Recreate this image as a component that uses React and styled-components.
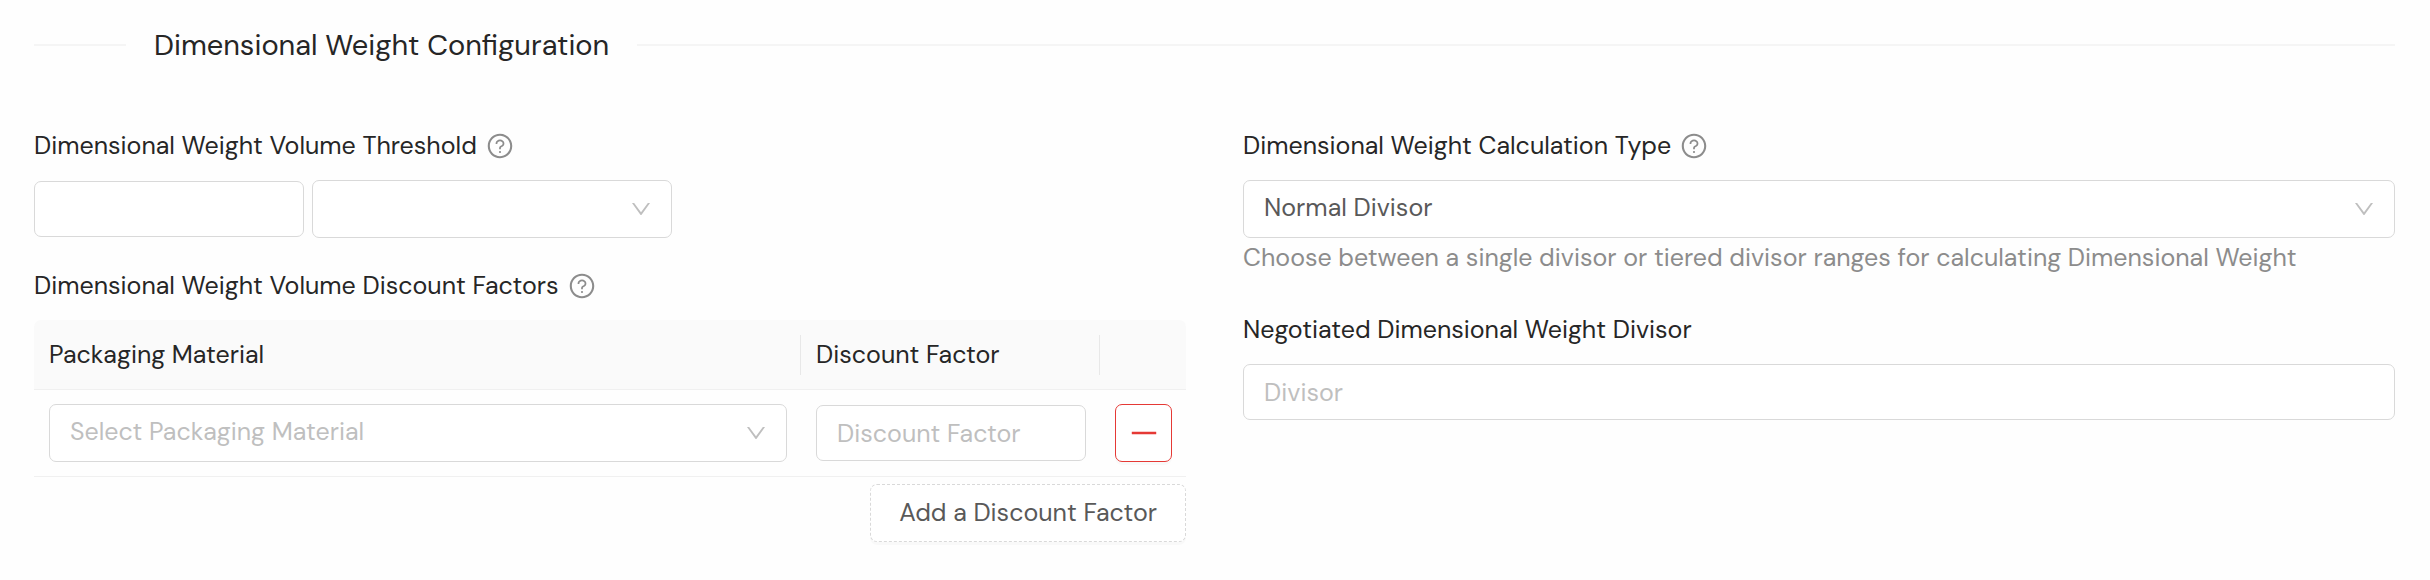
import React, { useState } from "react";
import styled, { createGlobalStyle } from "styled-components";
import {
  AiOutlineDown,
  AiOutlineMinus,
  AiOutlineQuestionCircle,
} from "react-icons/ai";

const App = () => {
  const [formData, setFormData] = useState({
    threshold: "",
    unit: "",
    calculationType: "normal",
    divisor: "",
  });
  const [factors, setFactors] = useState([{ id: 1, material: "", factor: "" }]);

  const handleChange = (e) => {
    const { name, value } = e.target;
    setFormData({
      ...formData,
      [name]: value,
    });
  };

  const handleFactorChange = (id, e) => {
    const { name, value } = e.target;
    setFactors(
      factors.map((row) => (row.id === id ? { ...row, [name]: value } : row))
    );
  };

  const addFactor = () => {
    setFactors([...factors, { id: Date.now(), material: "", factor: "" }]);
  };

  const removeFactor = (id) => {
    setFactors(factors.filter((row) => row.id !== id));
  };

  return (
    <>
      <GlobalStyle />
      <Page>
        <SectionTitle>Dimensional Weight Configuration</SectionTitle>
        <Columns>
          <Column>
            <FormItem>
              <LabelRow>
                <label htmlFor="threshold">
                  Dimensional Weight Volume Threshold
                </label>
                <HelpIcon />
              </LabelRow>
              <ThresholdFields>
                <TextInput
                  id="threshold"
                  name="threshold"
                  value={formData.threshold}
                  onChange={handleChange}
                />
                <SelectWrapper $width="360px">
                  <Select
                    name="unit"
                    aria-label="Volume unit"
                    value={formData.unit}
                    onChange={handleChange}
                  >
                    <option value=""></option>
                    <option value="in">in³</option>
                    <option value="cm">cm³</option>
                  </Select>
                  <Arrow />
                </SelectWrapper>
              </ThresholdFields>
            </FormItem>
            <FormItem>
              <LabelRow>
                <span id="factors-label">
                  Dimensional Weight Volume Discount Factors
                </span>
                <HelpIcon />
              </LabelRow>
              <FactorTable aria-labelledby="factors-label">
                <thead>
                  <tr>
                    <HeaderCell>
                      <HeaderText>Packaging Material</HeaderText>
                    </HeaderCell>
                    <HeaderCell $width="299px">
                      <HeaderText>Discount Factor</HeaderText>
                    </HeaderCell>
                    <HeaderCell $width="86px" aria-label="Actions" />
                  </tr>
                </thead>
                <tbody>
                  {factors.map((row) => (
                    <tr key={row.id}>
                      <Cell>
                        <SelectWrapper $width="100%">
                          <Select
                            name="material"
                            aria-label="Packaging Material"
                            $empty={!row.material}
                            value={row.material}
                            onChange={(e) => handleFactorChange(row.id, e)}
                          >
                            <option value="">Select Packaging Material</option>
                            <option value="box">Box</option>
                            <option value="envelope">Envelope</option>
                          </Select>
                          <Arrow />
                        </SelectWrapper>
                      </Cell>
                      <Cell>
                        <TextInput
                          name="factor"
                          aria-label="Discount Factor"
                          placeholder="Discount Factor"
                          value={row.factor}
                          onChange={(e) => handleFactorChange(row.id, e)}
                        />
                      </Cell>
                      <Cell>
                        <RemoveButton
                          type="button"
                          aria-label="Remove"
                          onClick={() => removeFactor(row.id)}
                        >
                          <AiOutlineMinus />
                        </RemoveButton>
                      </Cell>
                    </tr>
                  ))}
                </tbody>
              </FactorTable>
              <AddButton type="button" onClick={addFactor}>
                Add a Discount Factor
              </AddButton>
            </FormItem>
          </Column>
          <Column>
            <FormItem>
              <LabelRow>
                <label htmlFor="calculationType">
                  Dimensional Weight Calculation Type
                </label>
                <HelpIcon />
              </LabelRow>
              <SelectWrapper $width="100%">
                <Select
                  id="calculationType"
                  name="calculationType"
                  value={formData.calculationType}
                  onChange={handleChange}
                >
                  <option value="normal">Normal Divisor</option>
                  <option value="tiered">Tiered Divisor</option>
                </Select>
                <Arrow />
              </SelectWrapper>
              <Extra>
                Choose between a single divisor or tiered divisor ranges for
                calculating Dimensional Weight
              </Extra>
            </FormItem>
            <FormItem>
              <LabelRow>
                <label htmlFor="divisor">
                  Negotiated Dimensional Weight Divisor
                </label>
              </LabelRow>
              <TextInput
                id="divisor"
                name="divisor"
                placeholder="Divisor"
                $width="100%"
                value={formData.divisor}
                onChange={handleChange}
              />
            </FormItem>
          </Column>
        </Columns>
      </Page>
    </>
  );
};

const GlobalStyle = createGlobalStyle`
  * {
    box-sizing: border-box;
  }

  body {
    margin: 0;
    background: #fefefe;
    color: #262626;
    font-family: "DM Sans", Lato, "Liberation Sans", sans-serif;
    font-size: 25px;
    line-height: 36px;
  }

  input,
  select,
  button {
    font: inherit;
  }
`;

const Page = styled.main`
  padding: 23px 35px 38px 34px;
`;

const SectionTitle = styled.h2`
  display: flex;
  align-items: center;
  gap: 28px;
  margin: 0 0 61px;
  font-size: 29px;
  font-weight: 400;
  line-height: 44px;

  &::before,
  &::after {
    content: "";
    height: 2px;
    background: #f5f5f5;
  }

  &::before {
    width: 92px;
  }

  &::after {
    flex: 1;
  }
`;

const Columns = styled.div`
  display: grid;
  grid-template-columns: 1fr 1fr;
  gap: 57px;
`;

const Column = styled.div`
  display: flex;
  flex-direction: column;
  gap: 30px;
  min-width: 0;
`;

const FormItem = styled.div`
  display: flex;
  flex-direction: column;
`;

const LabelRow = styled.div`
  display: flex;
  align-items: center;
  gap: 9px;
  margin-bottom: 16px;
`;

const HelpIcon = styled(AiOutlineQuestionCircle)`
  width: 28px;
  height: 28px;
  color: #8c8c8c;
`;

const ThresholdFields = styled.div`
  display: flex;
  align-items: center;
  gap: 8px;
`;

const TextInput = styled.input`
  display: block;
  width: ${(props) => props.$width || "270px"};
  height: 56px;
  padding: 0 20px;
  color: #595959;
  background: #fff;
  border: 1px solid #d9d9d9;
  border-radius: 7px;

  &::placeholder {
    color: #bfbfbf;
    opacity: 1;
  }
`;

const SelectWrapper = styled.div`
  position: relative;
  width: ${(props) => props.$width};
`;

const Select = styled.select`
  display: block;
  width: 100%;
  height: 58px;
  padding: 0 56px 2px 20px;
  color: ${(props) => (props.$empty ? "#bfbfbf" : "#595959")};
  background: #fff;
  border: 1px solid #d9d9d9;
  border-radius: 7px;
  appearance: none;
`;

const Arrow = styled(AiOutlineDown)`
  position: absolute;
  top: 17px;
  right: 19px;
  width: 24px;
  height: 24px;
  color: #bfbfbf;
  pointer-events: none;
`;

const FactorTable = styled.table`
  width: 100%;
  table-layout: fixed;
  border-collapse: separate;
  border-spacing: 0;
`;

const HeaderCell = styled.th`
  width: ${(props) => props.$width || "auto"};
  height: 70px;
  padding: 14px 0;
  font-weight: 400;
  text-align: left;
  background: #fafafa;
  border-bottom: 1px solid #f0f0f0;

  &:first-child {
    border-top-left-radius: 7px;
  }

  &:last-child {
    border-top-right-radius: 7px;
  }
`;

const HeaderText = styled.div`
  padding: 0 15px;
  line-height: 40px;
  border-right: 1px solid #e8e8e8;
`;

const Cell = styled.td`
  padding: 14px 14px 14px 15px;
  border-bottom: 1px solid #f0f0f0;
`;

const RemoveButton = styled.button`
  display: flex;
  align-items: center;
  justify-content: center;
  width: 57px;
  height: 58px;
  padding: 0;
  color: #e53935;
  font-size: 34px;
  background: #fff;
  border: 1px solid #e53935;
  border-radius: 7px;
  box-shadow: 0 3px 0 rgba(0, 0, 0, 0.02);
  cursor: pointer;
`;

const AddButton = styled.button`
  align-self: flex-end;
  height: 58px;
  margin-top: 7px;
  padding: 0 28px;
  color: #595959;
  background: #fff;
  border: 1px dashed #d9d9d9;
  border-radius: 7px;
  box-shadow: 0 3px 0 rgba(0, 0, 0, 0.02);
  cursor: pointer;
`;

const Extra = styled.div`
  padding-bottom: 4px;
  color: #8c8c8c;
  line-height: 40px;
`;

export default App;
